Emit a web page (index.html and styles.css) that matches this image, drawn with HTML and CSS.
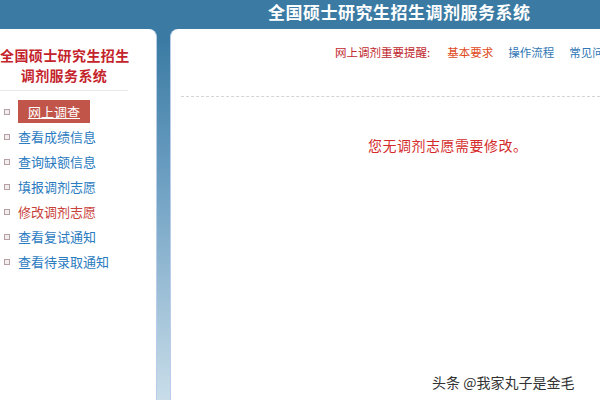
FILE: index.html
```html
<!DOCTYPE html>
<html lang="zh-CN">
<head>
    <meta charset="UTF-8">
    <title>全国硕士研究生招生调剂服务系统</title>
    <link rel="stylesheet" href="styles.css">
</head>
<body>
    <div class="header">全国硕士研究生招生调剂服务系统</div>
    <div class="main">
        <div class="side">
            <div class="side-title">全国硕士研究生招生<br>调剂服务系统</div>
            <ul class="menu">
                <li><a class="current" href="#">网上调查</a></li>
                <li><a href="#">查看成绩信息</a></li>
                <li><a href="#">查询缺额信息</a></li>
                <li><a href="#">填报调剂志愿</a></li>
                <li><a class="red" href="#">修改调剂志愿</a></li>
                <li><a href="#">查看复试通知</a></li>
                <li><a href="#">查看待录取通知</a></li>
            </ul>
        </div>
        <div class="content">
            <div class="tips">
                <span class="tips-label">网上调剂重要提醒:</span>
                <a class="orange" href="#">基本要求</a>
                <a href="#">操作流程</a>
                <a href="#">常见问题</a>
            </div>
            <div class="notice">您无调剂志愿需要修改。</div>
        </div>
    </div>
    <div class="watermark">头条 @我家丸子是金毛</div>
</body>
</html>
```

FILE: styles.css
```css
body {
    margin: 0;
    width: 600px;
    height: 400px;
    overflow: hidden;
    font-family: "Noto Sans CJK SC", "Liberation Sans", sans-serif;
    background: linear-gradient(#3b7ba3 0, #3b7ba3 40px, #6d9fc2 180px, #c9dde9 400px);
    position: relative;
}
.header {
    height: 29px;
    line-height: 23px;
    background-color: #3b7ba3;
    color: #fff;
    font-size: 17px;
    font-weight: bold;
    padding-left: 268px;
    letter-spacing: 0.5px;
    white-space: nowrap;
}
.main {
    display: flex;
    gap: 13px;
    height: 371px;
}
.side {
    width: 156px;
    background-color: #fff;
    border-top-right-radius: 8px;
    border-right: 1px solid #b9cdea;
    flex-shrink: 0;
}
.side-title {
    color: #c4232b;
    font-size: 14px;
    font-weight: bold;
    line-height: 20px;
    text-align: center;
    width: 128px;
    padding-top: 16px;
    padding-bottom: 5px;
    letter-spacing: 0.4px;
    border-bottom: 1px solid #e8e8e8;
    margin-right: 4px;
    white-space: nowrap;
}
.menu {
    list-style: none;
    margin: 0;
    padding: 8px 0 0 0;
}
.menu li {
    height: 25px;
    display: flex;
    align-items: center;
    font-size: 13px;
}
.menu li::before {
    content: "";
    width: 4px;
    height: 4px;
    border: 1px solid #b7a0a4;
    background-color: #f3eeee;
    margin: 0 8px 0 4px;
}
.menu a {
    color: #2b7bbf;
    text-decoration: none;
}
.menu a.red {
    color: #c8413a;
}
.menu a.current {
    background-color: #c2554a;
    color: #fff;
    text-decoration: underline;
    padding: 2px 10px;
    line-height: 19px;
}
.content {
    flex: 1;
    background-color: #fff;
    border-top-left-radius: 8px;
    border-left: 1px solid #b9cdea;
    min-width: 0;
}
.tips {
    display: flex;
    gap: 15px;
    padding: 14px 0 0 154px;
    font-size: 11.5px;
    line-height: 18px;
    white-space: nowrap;
    overflow: hidden;
    height: 53px;
    margin-left: 10px;
    border-bottom: 1px dashed #d4d4d4;
}
.tips-label {
    color: #c0282e;
    margin-right: 2px;
}
.tips a {
    color: #2f76b4;
    text-decoration: none;
}
.tips a.orange {
    color: #e04a1c;
}
.notice {
    color: #d42a2a;
    font-size: 14px;
    padding: 38px 0 0 197px;
    letter-spacing: 0.5px;
}
.watermark {
    position: absolute;
    left: 432px;
    top: 372px;
    font-size: 14px;
    color: #333;
    text-shadow: 0 0 2px #fff, 0 0 2px #fff;
    white-space: nowrap;
}
```
